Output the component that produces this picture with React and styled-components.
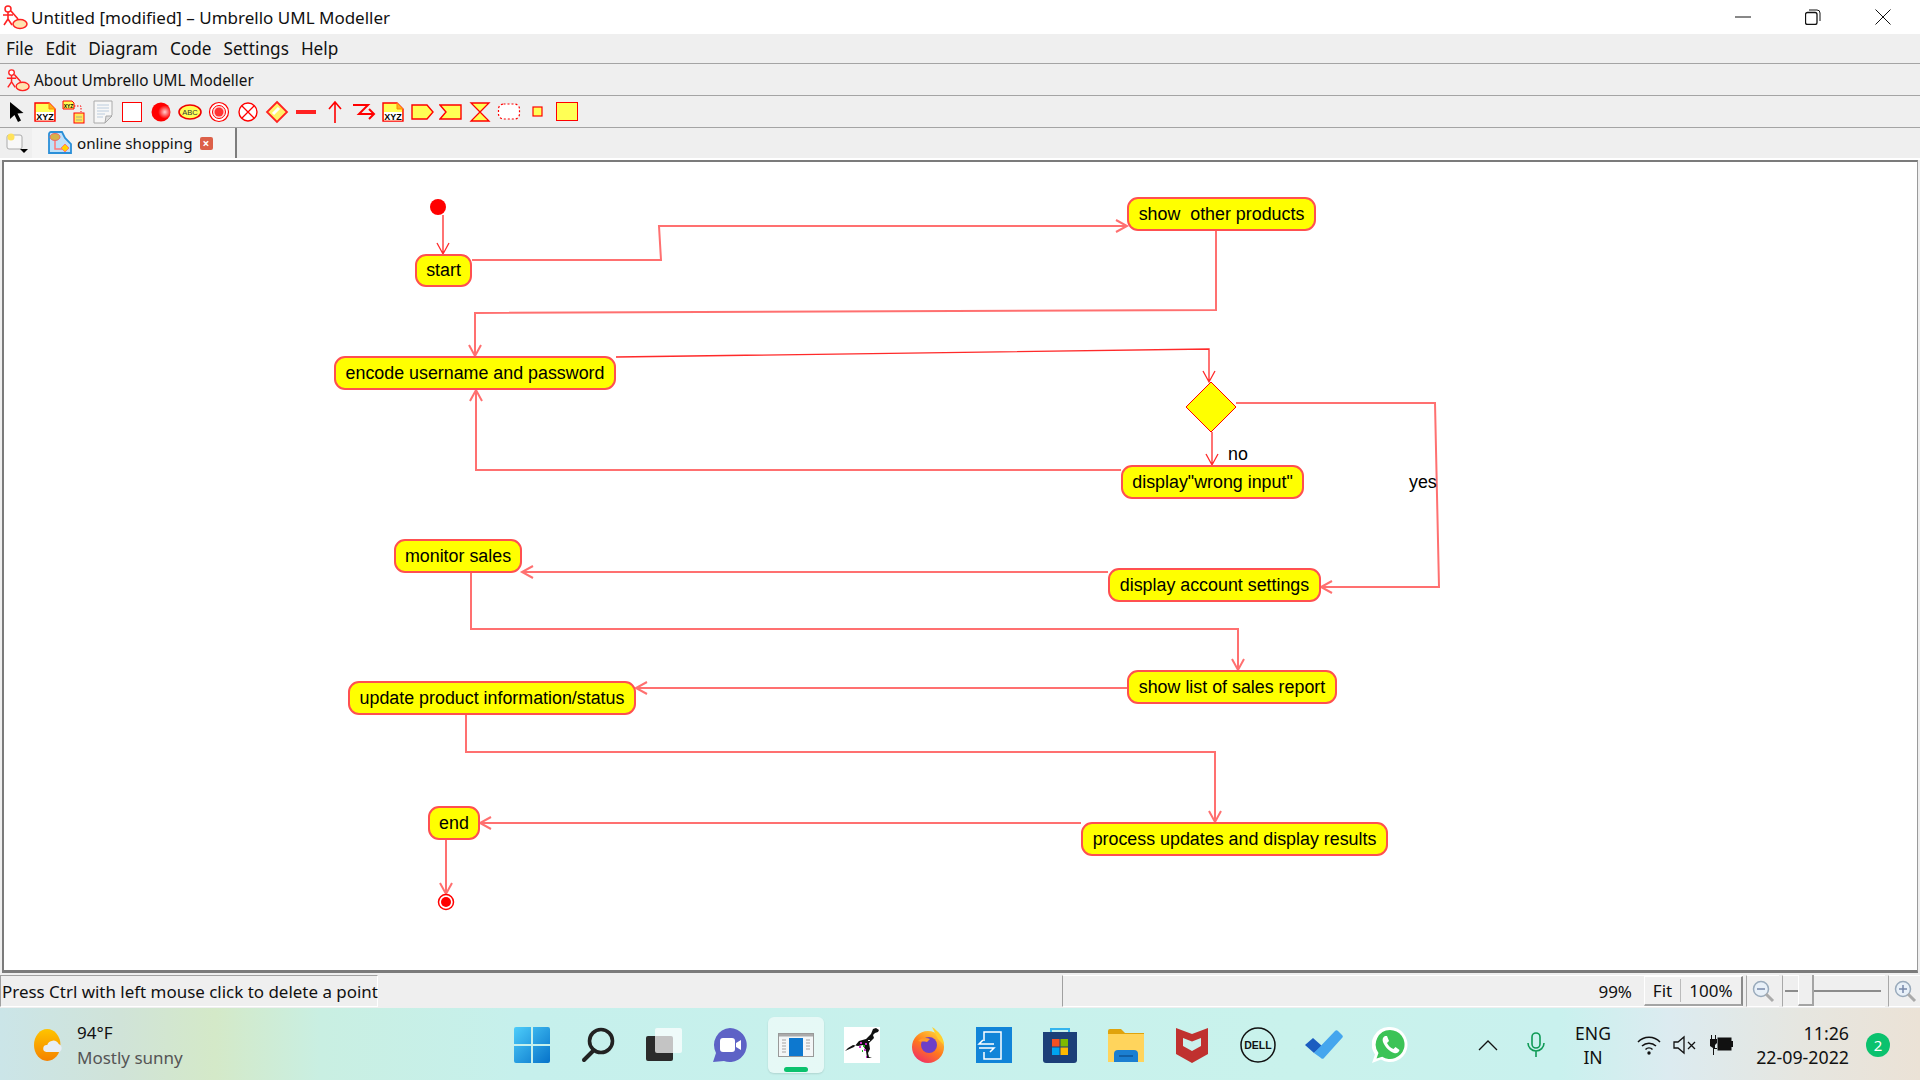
import React from "react";
import styled, { createGlobalStyle } from "styled-components";

const GlobalStyle = createGlobalStyle`
    html, body {
        margin: 0;
        padding: 0;
        background: #efefef;
    }
    * {
        box-sizing: border-box;
    }
`;

const UI_FONT = `"Noto Sans", "Open Sans", sans-serif`;
const OX = 4;
const OY = 162;

const Page = styled.div`
    width: 1920px;
    height: 1080px;
    display: flex;
    flex-direction: column;
    overflow: hidden;
    font-family: ${UI_FONT};
    color: #111;
`;

const TitleBar = styled.div`
    height: 34px;
    background: #fff;
    display: flex;
    align-items: center;
    padding-left: 2px;
    font-size: 17px;
`;

const TitleText = styled.span`
    margin-left: 3px;
    flex: 1;
`;

const WinButton = styled.div`
    width: 70px;
    height: 34px;
    display: flex;
    align-items: center;
    justify-content: center;
    &:last-child {
        margin-right: 2px;
    }
`;

const Bar = styled.div`
    height: ${(p) => p.$h}px;
    background: #efefef;
    border-bottom: 1px solid #a4a4a4;
    display: flex;
    align-items: center;
`;

const Spacer = styled.span`
    flex-shrink: 0;
    width: ${(p) => p.$w}px;
`;

const MenuItem = styled.span`
    font-size: 17.2px;
    margin-left: ${(p) => p.$gap}px;
`;

const AboutText = styled.span`
    font-size: 15.35px;
    margin-left: 4px;
`;

const ToolCell = styled.div`
    width: 29px;
    height: 24px;
    display: flex;
    align-items: center;
    justify-content: center;
    flex-shrink: 0;
`;

const TabRow = styled.div`
    height: 32px;
    background: #efefef;
    border-bottom: 2px solid #fff;
    display: flex;
    align-items: stretch;
`;

const NewTab = styled.div`
    width: 32px;
    display: flex;
    align-items: center;
    padding-left: 6px;
`;

const Tab = styled.div`
    width: 205px;
    display: flex;
    align-items: center;
    padding-left: 16px;
    background: #f4f4f4;
    border-right: 2px solid #7d7d7d;
    font-size: 15.2px;
`;

const TabLabel = styled.span`
    margin-left: 5px;
    margin-right: 7px;
`;

const CloseBadge = styled.div`
    width: 13px;
    height: 13px;
    background: #dc6049;
    border-radius: 2px;
    color: #fff;
    font-size: 12px;
    font-weight: 700;
    line-height: 13px;
    text-align: center;
`;

const Canvas = styled.div`
    flex: 1;
    position: relative;
    margin: 0 2px;
    background: #fff;
    border-top: 2px solid #7b7b7b;
    border-left: 2px solid #7b7b7b;
    border-bottom: 3px solid #7b7b7b;
    border-right: 1px solid #9a9a9a;
    overflow: hidden;
    font-family: "Liberation Sans", Arial, sans-serif;
`;

const Wires = styled.svg`
    position: absolute;
    left: 0;
    top: 0;
`;

const Node = styled.div`
    position: absolute;
    left: ${(p) => p.$x - OX}px;
    top: ${(p) => p.$y - OY}px;
    width: ${(p) => p.$w}px;
    height: ${(p) => p.$h}px;
    background: #ff0;
    border: 2px solid #ff5050;
    border-radius: 11px;
    display: flex;
    align-items: center;
    justify-content: center;
    font-size: 17.85px;
    color: #000;
    white-space: pre;
`;

const EdgeLabel = styled.span`
    position: absolute;
    left: ${(p) => p.$x - OX}px;
    top: ${(p) => p.$y - OY}px;
    font-size: 17.85px;
    line-height: 20px;
    color: #000;
`;

const StatusBar = styled.div`
    height: 35px;
    background: #efefef;
    display: flex;
    align-items: center;
    padding-top: 1px;
`;

const StatusMessage = styled.div`
    width: 378px;
    height: 32px;
    border-top: 1px solid #a0a0a0;
    border-left: 1px solid #a0a0a0;
    border-bottom: 1px solid #fff;
    border-right: 1px solid #fff;
    display: flex;
    align-items: center;
    padding-left: 1px;
    font-size: 16.95px;
    white-space: nowrap;
`;

const StatusPanel = styled.div`
    margin-left: 684px;
    width: 681px;
    height: 32px;
    border-left: 1px solid #a0a0a0;
    border-top: 1px solid #fff;
    border-bottom: 1px solid #fff;
    display: flex;
    align-items: center;
    justify-content: flex-end;
    font-size: 17px;
`;

const Percent = styled.span`
    margin-right: 12px;
`;

const FitGroup = styled.div`
    width: 99px;
    height: 30px;
    display: flex;
    align-items: center;
    background: #f0f0f0;
    border-top: 1px solid #fff;
    border-left: 1px solid #fff;
    border-right: 2px solid #8a8a8a;
    border-bottom: 2px solid #a4a4a4;
`;

const FitButton = styled.span`
    text-align: center;
    flex: ${(p) => p.$grow};
    & + & {
        border-left: 1px solid #bbb;
    }
`;

const ZoomButton = styled.div`
    width: ${(p) => p.$w}px;
    height: 32px;
    margin-left: 3px;
    border-left: 1px solid #a8a8a8;
    border-top: 1px solid #fff;
    border-bottom: 1px solid #fff;
    display: flex;
    align-items: center;
    justify-content: center;
`;

const SliderBox = styled.div`
    width: 103px;
    height: 32px;
    margin-left: 3px;
    border-left: 1px solid #a8a8a8;
    border-top: 1px solid #fff;
    border-bottom: 1px solid #fff;
    position: relative;
`;

const SliderTrack = styled.div`
    position: absolute;
    left: 2px;
    right: 4px;
    top: 14px;
    height: 2px;
    background: #8c8c8c;
`;

const SliderThumb = styled.div`
    position: absolute;
    left: 15px;
    top: -1px;
    width: 16px;
    height: 31px;
    background: #efefef;
    border-right: 2px solid #a4a4a4;
    border-left: 1px solid #fff;
    border-bottom: 2px solid #a4a4a4;
`;

const Taskbar = styled.div`
    height: 72px;
    padding-top: 2px;
    display: flex;
    align-items: center;
    font-family: "Noto Sans", "Open Sans", sans-serif;
    background: linear-gradient(
        90deg,
        #cbe5e8 0,
        #d0e3d8 120px,
        #d4e9c8 215px,
        #c9efe2 320px,
        #c6f0ec 520px,
        #c9f2ec 1300px,
        #c9f1ee 1560px,
        #dcebf0 1670px,
        #e6e6e0 1800px,
        #ebe2d6 1920px
    );
`;

const Weather = styled.div`
    width: 499px;
    display: flex;
    align-items: center;
    padding-left: 34px;
`;

const WeatherText = styled.div`
    margin-left: 13px;
    font-size: 17px;
    line-height: 25px;
`;

const MutedLine = styled.div`
    color: #555;
`;

const Apps = styled.div`
    display: flex;
    width: 924px;
    align-items: center;
`;

const AppCell = styled.div`
    height: 56px;
    display: flex;
    align-items: center;
    justify-content: center;
    position: relative;
    border-radius: 6px;
    background: ${(p) => (p.$active ? "rgba(255,255,255,0.55)" : "transparent")};
    box-shadow: ${(p) => (p.$active ? "0 1px 2px rgba(0,0,0,0.12)" : "none")};
    margin: ${(p) => (p.$active ? "0 5px" : "0")};
    flex: ${(p) => (p.$active ? "0 0 56px" : "0 0 66px")};
`;

const ActiveDot = styled.div`
    position: absolute;
    bottom: 1px;
    left: 16px;
    width: 24px;
    height: 5px;
    border-radius: 3px;
    background: #0bc26e;
`;

const Tray = styled.div`
    flex: 1;
    display: flex;
    align-items: center;
    padding-left: 55px;
`;

const Lang = styled.div`
    width: 50px;
    margin-left: 23px;
    text-align: center;
    font-size: 17.5px;
    line-height: 24px;
`;

const TrayIcon = styled.div`
    margin-left: ${(p) => p.$gap}px;
    display: flex;
    align-items: center;
`;

const Clock = styled.div`
    margin-left: 16px;
    width: 100px;
    text-align: right;
    font-size: 17.8px;
    line-height: 24px;
    white-space: nowrap;
`;

const Badge = styled.div`
    margin-left: 17px;
    width: 24px;
    height: 24px;
    border-radius: 50%;
    background: #0bc26e;
    color: #fff;
    font-size: 15px;
    line-height: 24px;
    text-align: center;
`;

const nodes = [
    { text: "start", x: 415, y: 254, w: 57 },
    { text: "show  other products", x: 1127, y: 197, w: 189 },
    { text: "encode username and password", x: 334, y: 356, w: 282 },
    { text: 'display"wrong input"', x: 1121, y: 465, w: 183 },
    { text: "monitor sales", x: 394, y: 539, w: 128 },
    { text: "display account settings", x: 1108, y: 568, w: 213 },
    { text: "show list of sales report", x: 1127, y: 670, w: 210 },
    { text: "update product information/status", x: 348, y: 681, w: 288 },
    { text: "end", x: 428, y: 806, w: 52 },
    { text: "process updates and display results", x: 1081, y: 822, w: 307 },
];

const edges = [
    { thin: true, pts: [[443, 215], [443, 254]] },
    { pts: [[472, 260], [661, 260], [659, 226], [1127, 226]] },
    { pts: [[1216, 230], [1216, 310], [475, 313], [475, 356]] },
    { thin: true, pts: [[616, 357], [1209, 349], [1209, 382]] },
    { thin: true, pts: [[1212, 432], [1212, 465]] },
    { pts: [[1236, 403], [1435, 403], [1439, 587], [1321, 587]] },
    { pts: [[1121, 470], [476, 470], [476, 390]] },
    { pts: [[1108, 572], [522, 572]] },
    { pts: [[471, 572], [471, 629], [1238, 629], [1238, 670]] },
    { pts: [[1127, 688], [636, 688]] },
    { pts: [[466, 714], [466, 752], [1215, 752], [1215, 822]] },
    { pts: [[1081, 823], [480, 823]] },
    { pts: [[446, 839], [446, 894]] },
];

function edgePath(pts) {
    const line = pts.map((p, i) => `${i ? "L" : "M"}${p[0] - OX} ${p[1] - OY}`).join(" ");
    const [ax, ay] = pts[pts.length - 2];
    const [bx, by] = pts[pts.length - 1];
    const len = Math.hypot(bx - ax, by - ay);
    const ux = (bx - ax) / len;
    const uy = (by - ay) / len;
    const tx = bx - OX;
    const ty = by - OY;
    const h1 = `${tx - ux * 11 - uy * 6} ${ty - uy * 11 + ux * 6}`;
    const h2 = `${tx - ux * 11 + uy * 6} ${ty - uy * 11 - ux * 6}`;
    return `${line} M${h1} L${tx} ${ty} L${h2}`;
}

function Edge({ pts, thin }) {
    return (
        <path
            d={edgePath(pts)}
            fill="none"
            stroke={thin ? "#ff2a2a" : "#ff7070"}
            strokeWidth={thin ? 1.3 : 2}
        />
    );
}

function ActorIcon({ size = 26 }) {
    return (
        <svg width={size} height={size} viewBox="0 0 26 26">
            <circle cx="6" cy="5" r="3" fill="#fff" stroke="#f22" strokeWidth="1.5" />
            <path d="M6 8v7M1 11h10M6 15l-4 6M6 15l4 6M9 7l7 8" fill="none" stroke="#f22" strokeWidth="1.6" />
            <ellipse cx="18" cy="20" rx="7" ry="4.5" fill="#ffe3b0" stroke="#f22" strokeWidth="1.5" />
        </svg>
    );
}

const Ico = ({ children }) => (
    <svg width="24" height="24" viewBox="0 0 24 24">
        {children}
    </svg>
);

const XyzNote = () => (
    <>
        <path d="M2 3h14l6 6v12H2z" fill="#ff5" stroke="#f00" strokeWidth="1.4" />
        <path d="M16 3l6 6h-6z" fill="#ffb020" stroke="#f80" />
        <rect x="3" y="12" width="18" height="8.500" fill="#fff" />
        <text x="12" y="20" textAnchor="middle" fontSize="9" fontWeight="700" fontFamily="Liberation Sans" fill="#000">XYZ</text>
    </>
);

const tools = [
    <Ico key="pointer"><path d="M6 2l0 17 4.5-4 3.5 7 3-1.500-3.500-7 6-.5z" fill="#000" /></Ico>,
    <Ico key="xyz"><XyzNote /></Ico>,
    <Ico key="xyz2">
        <path d="M1 1h9l2 2v6H1z" fill="#ff5" stroke="#f00" />
        <text x="6.500" y="8" textAnchor="middle" fontSize="5" fontWeight="700" fontFamily="Liberation Sans" fill="#000">XYZ</text>
        <path d="M12 6h7v6" fill="none" stroke="#f00" strokeDasharray="1.5 1.5" />
        <rect x="12" y="13" width="10" height="10" fill="#ffe95a" stroke="#f00" />
        <path d="M14 17h6M14 20h6" stroke="#aa8" />
    </Ico>,
    <Ico key="note">
        <path d="M3 1h18v14l-7 8H3z" fill="#f7f7f7" stroke="#aaa" />
        <path d="M14 23l1-7h6z" fill="#ddd" stroke="#aaa" />
        <path d="M6 5h12M6 8h12M6 11h12M6 14h8M6 17h6" stroke="#bcd" />
    </Ico>,
    <Ico key="box"><rect x="2.500" y="2.500" width="19" height="19" fill="#fff" stroke="#f00" strokeWidth="1" /></Ico>,
    <Ico key="ball">
        <defs>
            <radialGradient id="ballFill" cx="0.7" cy="0.5" r="0.7">
                <stop offset="0" stopColor="#ffd0d0" />
                <stop offset="0.5" stopColor="#f00" />
            </radialGradient>
        </defs>
        <circle cx="12" cy="12" r="9.500" fill="url(#ballFill)" />
    </Ico>,
    <Ico key="oval">
        <ellipse cx="12" cy="12" rx="11" ry="7" fill="#ff5" stroke="#e00" strokeWidth="1.6" />
        <text x="12" y="15" textAnchor="middle" fontSize="7.500" fontFamily="Liberation Sans" fill="#333">ABC</text>
    </Ico>,
    <Ico key="target">
        <circle cx="12" cy="12" r="9.500" fill="#fff" stroke="#f00" strokeWidth="1.2" />
        <circle cx="12" cy="12" r="6.500" fill="#fdd" stroke="#f00" />
        <circle cx="12" cy="12" r="4.500" fill="#f33" />
    </Ico>,
    <Ico key="cross">
        <circle cx="12" cy="12" r="9" fill="#fff" stroke="#f00" strokeWidth="1.4" />
        <path d="M6 6l12 12M18 6L6 18" stroke="#f00" strokeWidth="1.3" />
    </Ico>,
    <Ico key="diamond">
        <path d="M12 2l10 10-10 10L2 12z" fill="#fff26a" stroke="#f22" strokeWidth="1.8" />
        <path d="M8 14l6-6" stroke="#fff" strokeWidth="3" />
    </Ico>,
    <Ico key="bar"><rect x="2" y="10" width="20" height="4" fill="#f22" /></Ico>,
    <Ico key="up"><path d="M12 23V3M6 9l6-7 6 7" fill="none" stroke="#f00" strokeWidth="1.6" /></Ico>,
    <Ico key="zig"><path d="M1 5h15L7 14h15M17 9l5 5-5 5" fill="none" stroke="#f00" strokeWidth="2" /></Ico>,
    <Ico key="xyz3"><XyzNote /></Ico>,
    <Ico key="pent"><path d="M2 5h15l6 7-6 7H2z" fill="#ff5" stroke="#f00" strokeWidth="1.4" /></Ico>,
    <Ico key="notch"><path d="M1 5h21v14H1l6-7z" fill="#ff5" stroke="#f00" strokeWidth="1.4" /></Ico>,
    <Ico key="hourglass"><path d="M3 3h18l-9 9 9 9H3l9-9z" fill="#ff5" stroke="#f00" strokeWidth="1.3" /></Ico>,
    <Ico key="dashed"><rect x="1.500" y="4" width="21" height="15" rx="5" fill="#fff" stroke="#f00" strokeWidth="1.2" strokeDasharray="2 2" /></Ico>,
    <Ico key="tiny"><rect x="7" y="7" width="9" height="9" fill="#ff5" stroke="#f00" strokeWidth="1.2" /></Ico>,
    <Ico key="yellow"><rect x="1.500" y="2.500" width="21" height="18" fill="#ff5" stroke="#f00" strokeWidth="1" /></Ico>,
];

const apps = [
    <svg key="win" width="36" height="36" viewBox="0 0 36 36">
        <defs>
            <linearGradient id="winFill" x1="0" y1="0" x2="1" y2="1">
                <stop offset="0" stopColor="#4dcdfa" />
                <stop offset="1" stopColor="#0672c9" />
            </linearGradient>
        </defs>
        <path d="M2 0h15v17H0V2a2 2 0 0 1 2-2zM19 0h15a2 2 0 0 1 2 2v15H19zM0 19h17v17H2a2 2 0 0 1-2-2zM19 19h17v15a2 2 0 0 1-2 2H19z" fill="url(#winFill)" />
    </svg>,
    <svg key="search" width="34" height="36" viewBox="0 0 34 36">
        <circle cx="20" cy="14" r="11.500" fill="none" stroke="#222" strokeWidth="3.600" />
        <path d="M12 24L3 33" stroke="#222" strokeWidth="4" strokeLinecap="round" />
    </svg>,
    <svg key="tasks" width="36" height="36" viewBox="0 0 36 36">
        <rect x="0" y="9" width="27" height="25" rx="2" fill="#2b2b2b" />
        <rect x="9" y="1" width="27" height="25" rx="2" fill="#fff" fillOpacity="0.72" />
    </svg>,
    <svg key="meet" width="36" height="36" viewBox="0 0 36 36">
        <path d="M18 1a17 17 0 1 1-6 33L1 35l3-9A17 17 0 0 1 18 1z" fill="#5d62c6" />
        <rect x="8" y="11" width="15" height="14" rx="3" fill="#fff" />
        <path d="M24 16l5-3v10l-5-3z" fill="#fff" />
    </svg>,
    <svg key="umbrello" width="36" height="24" viewBox="0 0 36 24">
        <rect x="0.500" y="0.500" width="35" height="23" fill="#f3f6f7" stroke="#999" />
        <rect x="1" y="1" width="34" height="2.500" fill="#aaa" />
        <path d="M4 7h4M4 10h4M4 13h4M4 16h4M4 19h4M28 7h4M28 10h4M28 13h4M28 16h4" stroke="#ccc" strokeWidth="2" />
        <rect x="11" y="5" width="14" height="18" fill="#0d78cf" />
    </svg>,
    <svg key="dino" width="36" height="36" viewBox="0 0 36 36">
        <rect width="36" height="36" fill="#fff" />
        <path d="M1 24l9-4 5-6 7-2 5-5 2-5 3-1 3 2-1 2-3 1-2 2 1 3-3 3-2 2 1 6-2 4 1 4 3 1h-5l-1-7-3-6-5 1-5-1-5 3z" fill="#111" />
        <path d="M16 15h2v2h-2zM21 16h2v2h-2zM20 22h2v2h-2zM15 19h2v2h-2zM22 29h1v2h-1z" fill="#c3c" />
        <path d="M19 18h2v2h-2zM18 23h1v2h-1z" fill="#2a2" />
        <path d="M24 13h2v1h-2zM21 26h1v2h-1z" fill="#fff" />
    </svg>,
    <svg key="firefox" width="36" height="36" viewBox="0 0 36 36">
        <defs>
            <linearGradient id="foxFill" x1="0.800" y1="0" x2="0.200" y2="1">
                <stop offset="0" stopColor="#ffd23a" />
                <stop offset="0.500" stopColor="#ff7a1c" />
                <stop offset="1" stopColor="#f02a6b" />
            </linearGradient>
        </defs>
        <circle cx="18" cy="20" r="16" fill="url(#foxFill)" />
        <path d="M22 0c6 4 12 10 12 18l-6-6z" fill="#ffcf2d" />
        <circle cx="19" cy="18" r="8" fill="#6d3fc8" />
        <path d="M8 14c3-3 8-4 12-2l-3 3c-3-1-6 0-9-1z" fill="#ff9a2c" />
    </svg>,
    <svg key="share" width="36" height="36" viewBox="0 0 36 36">
        <rect width="36" height="36" fill="#1184d8" />
        <path d="M8 14V5h17v27H8v-7" fill="none" stroke="#fff" strokeWidth="1.500" />
        <path d="M18 17H3l4-4M3 21h15l-4 4" fill="none" stroke="#fff" strokeWidth="1.500" />
    </svg>,
    <svg key="store" width="36" height="38" viewBox="0 0 36 38">
        <path d="M9 8V3h18v5" fill="none" stroke="#34b4ee" strokeWidth="2" />
        <path d="M1 6h34v28a3 3 0 0 1-3 3H4a3 3 0 0 1-3-3z" fill="#1c3f78" />
        <rect x="10" y="13" width="7.500" height="7.500" fill="#f25022" />
        <rect x="18.500" y="13" width="7.500" height="7.500" fill="#7fba00" />
        <rect x="10" y="21.500" width="7.500" height="7.500" fill="#00a4ef" />
        <rect x="18.500" y="21.500" width="7.500" height="7.500" fill="#ffb900" />
    </svg>,
    <svg key="folder" width="36" height="34" viewBox="0 0 36 34">
        <path d="M0 3a2 2 0 0 1 2-2h11l4 4h19v5H0z" fill="#e0a30c" />
        <path d="M0 6h36v28H0z" fill="#ffd45c" />
        <path d="M6 34V26a4 4 0 0 1 4-4h16a4 4 0 0 1 4 4v8z" fill="#1b7fd1" />
        <path d="M11 28h14" stroke="#0f5596" strokeWidth="1.500" />
    </svg>,
    <svg key="mcafee" width="32" height="36" viewBox="0 0 32 36">
        <path d="M0 1l16 6 16-6v26l-16 9L0 27z" fill="#c0312f" />
        <path d="M7 11l9 3.500L25 11v13l-9 5-9-5z" fill="#cbf0ec" />
        <path d="M7 19l9 5 9-5v6l-9 5-9-5z" fill="#c0312f" />
    </svg>,
    <svg key="dell" width="36" height="36" viewBox="0 0 36 36">
        <circle cx="18" cy="18" r="17" fill="none" stroke="#111" strokeWidth="1.500" />
        <text x="18" y="22" textAnchor="middle" fontSize="10.500" fontWeight="700" fontFamily="Liberation Sans" fill="#111">DELL</text>
    </svg>,
    <svg key="todo" width="38" height="30" viewBox="0 0 38 30">
        <path d="M0 15l8-7 9 8-8 7z" fill="#1b5cc0" />
        <path d="M9 23L30 1a2 2 0 0 1 3 0l4 4a2 2 0 0 1 0 3L19 28a2 2 0 0 1-3 0z" fill="#45a6ee" />
    </svg>,
    <svg key="whatsapp" width="36" height="36" viewBox="0 0 36 36">
        <path d="M18 0a17.500 17.500 0 1 1-9 32.500L0 36l3-8.500A17.500 17.500 0 0 1 18 0z" fill="#fff" />
        <path d="M18 3a14.500 14.500 0 1 1-7.800 26.700L4.500 31.500l2-5.500A14.500 14.500 0 0 1 18 3z" fill="#3cc356" />
        <path d="M13 9c-2 1-3 3-2 6 2 5 6 9 11 11 3 1 5-1 5.500-3l-4-3-2 2c-3-1-5-3-6.500-6l2-2-2-5z" fill="#fff" />
    </svg>,
];

function App() {
    return (
        <Page>
            <GlobalStyle />
            <TitleBar>
                <ActorIcon />
                <TitleText>Untitled [modified] – Umbrello UML Modeller</TitleText>
                <WinButton>
                    <svg width="16" height="16" viewBox="0 0 16 16"><path d="M0 8h16" stroke="#111" /></svg>
                </WinButton>
                <WinButton>
                    <svg width="16" height="16" viewBox="0 0 16 16">
                        <rect x="0.500" y="3.500" width="11.500" height="12" rx="2" fill="none" stroke="#111" strokeWidth="1.300" />
                        <path d="M4 1h8a3 3 0 0 1 3 3v8" fill="none" stroke="#111" />
                    </svg>
                </WinButton>
                <WinButton>
                    <svg width="16" height="16" viewBox="0 0 16 16"><path d="M0.500 0.500l15 15M15.500 0.500l-15 15" stroke="#111" /></svg>
                </WinButton>
            </TitleBar>

            <Bar $h={30}>
                <MenuItem $gap={6}>File</MenuItem>
                <MenuItem $gap={12}>Edit</MenuItem>
                <MenuItem $gap={12}>Diagram</MenuItem>
                <MenuItem $gap={12}>Code</MenuItem>
                <MenuItem $gap={12}>Settings</MenuItem>
                <MenuItem $gap={12}>Help</MenuItem>
            </Bar>

            <Bar $h={32}>
                <Spacer $w={6} />
                <ActorIcon size={24} />
                <AboutText>About Umbrello UML Modeller</AboutText>
            </Bar>

            <Bar $h={32}>
                <Spacer $w={1.5} />
                {tools.map((tool) => (
                    <ToolCell key={tool.key}>{tool}</ToolCell>
                ))}
            </Bar>

            <TabRow>
                <NewTab>
                    <svg width="22" height="22" viewBox="0 0 22 22">
                        <rect x="1" y="3" width="15" height="14" rx="2" fill="#f8f8f8" stroke="#aaa" />
                        <circle cx="5" cy="5" r="3.500" fill="#ffe25a" />
                        <path d="M14 17h8l-4 4z" fill="#000" />
                    </svg>
                </NewTab>
                <Tab>
                    <svg width="24" height="24" viewBox="0 0 24 24">
                        <path d="M1 3a2 2 0 0 1 2-2h11l3 6 6 6v9H1z" fill="#bfe0f8" stroke="#2a8fd8" strokeWidth="1.800" />
                        <ellipse cx="7" cy="6" rx="5" ry="3.500" fill="#d6b24a" stroke="#e66" />
                        <path d="M7 10v8h8" fill="none" stroke="#f77" strokeWidth="1.500" />
                        <path d="M17 13l4 4-4 4-4-4z" fill="#ffd400" stroke="#f77" />
                    </svg>
                    <TabLabel>online shopping</TabLabel>
                    <CloseBadge>×</CloseBadge>
                </Tab>
            </TabRow>

            <Canvas>
                <Wires width="1916" height="810">
                    {edges.map((edge, i) => (
                        <Edge key={i} pts={edge.pts} thin={edge.thin} />
                    ))}
                    <circle cx={438 - OX} cy={207 - OY} r="8" fill="#f00" />
                    <path
                        d={`M${1211 - OX} ${382 - OY}L${1236 - OX} ${407 - OY}L${1211 - OX} ${432 - OY}L${1186 - OX} ${407 - OY}z`}
                        fill="#ff0"
                        stroke="#f00"
                    />
                    <circle cx={446 - OX} cy={902 - OY} r="7.500" fill="#fff" stroke="#f00" strokeWidth="1.500" />
                    <circle cx={446 - OX} cy={902 - OY} r="5" fill="#f00" />
                </Wires>
                {nodes.map((n) => (
                    <Node key={n.text} $x={n.x} $y={n.y} $w={n.w} $h={n.text === "start" ? 33 : 34}>
                        {n.text}
                    </Node>
                ))}
                <EdgeLabel $x={1228} $y={444}>no</EdgeLabel>
                <EdgeLabel $x={1409} $y={472}>yes</EdgeLabel>
            </Canvas>

            <StatusBar>
                <StatusMessage>Press Ctrl with left mouse click to delete a point</StatusMessage>
                <StatusPanel>
                    <Percent>99%</Percent>
                    <FitGroup>
                        <FitButton $grow={35}>Fit</FitButton>
                        <FitButton $grow={60}>100%</FitButton>
                    </FitGroup>
                </StatusPanel>
                <ZoomButton $w={33}>
                    <svg width="24" height="24" viewBox="0 0 24 24">
                        <circle cx="10" cy="10" r="7.500" fill="#e8f0f8" stroke="#9ab" strokeWidth="1.500" />
                        <path d="M6 10h8" stroke="#78a" strokeWidth="1.500" />
                        <path d="M15 15l7 7" stroke="#aaa" strokeWidth="3" />
                    </svg>
                </ZoomButton>
                <SliderBox>
                    <SliderTrack />
                    <SliderThumb />
                </SliderBox>
                <ZoomButton $w={32}>
                    <svg width="24" height="24" viewBox="0 0 24 24">
                        <circle cx="10" cy="10" r="7.500" fill="#e8f0f8" stroke="#9ab" strokeWidth="1.500" />
                        <path d="M6 10h8M10 6v8" stroke="#78a" strokeWidth="1.500" />
                        <path d="M15 15l7 7" stroke="#aaa" strokeWidth="3" />
                    </svg>
                </ZoomButton>
            </StatusBar>

            <Taskbar>
                <Weather>
                    <svg width="30" height="36" viewBox="0 0 34 38">
                        <defs>
                            <linearGradient id="sunFill" x1="0" y1="0" x2="0" y2="1">
                                <stop offset="0" stopColor="#ffc400" />
                                <stop offset="1" stopColor="#f58200" />
                            </linearGradient>
                        </defs>
                        <ellipse cx="15" cy="19" rx="15" ry="18" fill="url(#sunFill)" />
                        <path d="M14 27a4 4 0 0 1 1-8 7 7 0 0 1 13-1 5 5 0 0 1 1 9z" fill="#e8eef6" />
                    </svg>
                    <WeatherText>
                        <div>94°F</div>
                        <MutedLine>Mostly sunny</MutedLine>
                    </WeatherText>
                </Weather>
                <Apps>
                    {apps.map((app) =>
                        app.key === "umbrello" ? (
                            <AppCell key={app.key} $active>
                                {app}
                                <ActiveDot />
                            </AppCell>
                        ) : (
                            <AppCell key={app.key}>{app}</AppCell>
                        )
                    )}
                </Apps>
                <Tray>
                    <svg width="20" height="12" viewBox="0 0 20 12"><path d="M1 11l9-9 9 9" fill="none" stroke="#111" strokeWidth="1.300" /></svg>
                    <TrayIcon $gap={29}>
                        <svg width="18" height="26" viewBox="0 0 18 26">
                            <rect x="5" y="1" width="8" height="15" rx="4" fill="none" stroke="#0e9a55" strokeWidth="1.600" />
                            <path d="M1 11a8 8 0 0 0 16 0M9 19v6" fill="none" stroke="#0e9a55" strokeWidth="1.600" />
                        </svg>
                    </TrayIcon>
                    <Lang>
                        <div>ENG</div>
                        <div>IN</div>
                    </Lang>
                    <TrayIcon $gap={19}>
                        <svg width="24" height="20" viewBox="0 0 24 20">
                            <path d="M1 7a15 15 0 0 1 22 0M5 11a10 10 0 0 1 14 0M8.500 14.500a5 5 0 0 1 7 0" fill="none" stroke="#111" strokeWidth="1.500" />
                            <circle cx="12" cy="18" r="1.700" fill="#111" />
                        </svg>
                    </TrayIcon>
                    <TrayIcon $gap={12}>
                        <svg width="24" height="20" viewBox="0 0 24 20">
                            <path d="M1 7h4l6-5v16l-6-5H1z" fill="none" stroke="#111" strokeWidth="1.300" />
                            <path d="M15 7l7 7M22 7l-7 7" stroke="#111" strokeWidth="1.300" />
                        </svg>
                    </TrayIcon>
                    <TrayIcon $gap={12}>
                        <svg width="24" height="22" viewBox="0 0 24 22">
                            <path d="M2 1h1v4H2zM6 1h1v4H6zM1 5h7v4l-2 2v3H8v1H5v6H4v-7l-3-2z" fill="#111" />
                            <rect x="9" y="4" width="13" height="12" fill="#111" stroke="#111" />
                            <rect x="22" y="7" width="2" height="6" fill="#111" />
                        </svg>
                    </TrayIcon>
                    <Clock>
                        <div>11:26</div>
                        <div>22-09-2022</div>
                    </Clock>
                    <Badge>2</Badge>
                </Tray>
            </Taskbar>
        </Page>
    );
}

export default App;
